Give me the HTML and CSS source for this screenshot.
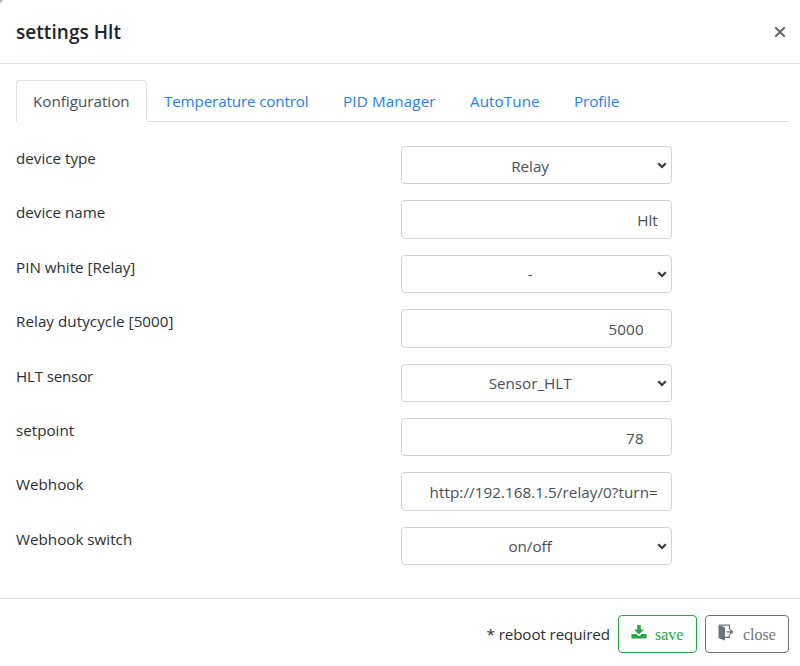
FILE: index.html
```html
<!DOCTYPE html>
<html lang="en">
<head>
<meta charset="utf-8">
<title>settings Hlt</title>
<link rel="stylesheet" href="styles.css">
</head>
<body>
<div class="modal">
  <header class="modal-header">
    <h5 class="title">settings Hlt</h5>
    <button class="dismiss" type="button" aria-label="dismiss"><svg width="12" height="12" viewBox="0 0 12 12"><path d="M1.2 1.2 10.8 10.8M10.8 1.2 1.2 10.8"/></svg></button>
  </header>
  <main class="modal-body">
    <nav class="tabs">
      <a class="tab active"><span>Konfiguration</span></a>
      <a class="tab temperature">Temperature control</a>
      <a class="tab pid">PID Manager</a>
      <a class="tab autotune">AutoTune</a>
      <a class="tab profile">Profile</a>
    </nav>
    <form class="form">
      <div class="row"><label>device type</label><div class="field"><select><option>Relay</option></select><svg class="chevron" viewBox="0 0 10 7"><path d="M1.2 1.3 5 5.1 8.8 1.3"/></svg></div></div>
      <div class="row"><label>device name</label><div class="field"><input type="text" value="Hlt"></div></div>
      <div class="row"><label>PIN white [Relay]</label><div class="field"><select><option>-</option></select><svg class="chevron" viewBox="0 0 10 7"><path d="M1.2 1.3 5 5.1 8.8 1.3"/></svg></div></div>
      <div class="row"><label class="duty">Relay dutycycle [5000]</label><div class="field"><input class="number" type="text" value="5000"></div></div>
      <div class="row"><label class="sensor">HLT sensor</label><div class="field"><select><option>Sensor_HLT</option></select><svg class="chevron" viewBox="0 0 10 7"><path d="M1.2 1.3 5 5.1 8.8 1.3"/></svg></div></div>
      <div class="row"><label>setpoint</label><div class="field"><input class="number" type="text" value="78"></div></div>
      <div class="row"><label>Webhook</label><div class="field"><input class="url" type="text" value="http://192.168.1.5/relay/0?turn="></div></div>
      <div class="row"><label>Webhook switch</label><div class="field"><select><option>on/off</option></select><svg class="chevron" viewBox="0 0 10 7"><path d="M1.2 1.3 5 5.1 8.8 1.3"/></svg></div></div>
    </form>
  </main>
  <footer class="modal-footer">
    <span class="note">* reboot required</span>
    <button class="btn save" type="button">
      <svg width="16" height="16" viewBox="0 0 16 16"><path d="M6.2 1h3.6v4.5H13L8 10.4 3 5.5h3.2z"/><path d="M1 10h4.2L8 12.3 10.8 10H15q.6 0 .6.6v3.3q0 .6-.6.6H1q-.6 0-.6-.6v-3.3Q.4 10 1 10z"/></svg>
      <span>save</span>
    </button>
    <button class="btn close" type="button">
      <svg width="16" height="17" viewBox="0 0 16 17"><path d="M.5 1.2 7 3v13.4L.5 14.3z"/><path class="line" d="M1 1.2h10.4v4.2M7 13.4h4.4v-3M8.5 7.9h5"/><path d="m12 4.8 3.6 3.1-3.6 3.1z"/></svg>
      <span>close</span>
    </button>
  </footer>
</div>
</body>
</html>
```
FILE: styles.css
```css
* { box-sizing: border-box; }

body {
  margin: 0;
  background: #b5b5b5;
  color: #2b2f33;
  font: 15.2px/24px "Open Sans", "Noto Sans", sans-serif;
}

.modal {
  width: 800px;
  height: 666px;
  display: flex;
  flex-direction: column;
  background: #fff;
  border-top-left-radius: 5px;
  overflow: hidden;
}

.modal-header {
  height: 64px;
  padding: 0 14px 0 16px;
  display: flex;
  align-items: center;
  justify-content: space-between;
  border-bottom: 1px solid #e2e6e8;
}

.title {
  margin: 1px 0 0;
  color: #212529;
  font-size: 19px;
  line-height: 30px;
  font-weight: 600;
  letter-spacing: 0.05px;
}

.dismiss {
  display: flex;
  padding: 0;
  border: 0;
  background: none;
}

.dismiss svg { fill: none; stroke: #6f6f6f; stroke-width: 2.3; }

.modal-body { flex: 1; padding: 16px 11px 0 16px; }

.tabs {
  height: 42px;
  display: flex;
  border-bottom: 1px solid #dee2e6;
}

.tab {
  height: 42px;
  padding: 9px 0 0 17px;
  color: #2480ee;
  white-space: nowrap;
}

.tab.active {
  width: 131px;
  padding: 8px 0 0 16px;
  color: #495057;
  background: #fff;
  border: 1px solid #dee2e6;
  border-bottom-color: #fff;
  border-radius: 4px 4px 0 0;
}

.temperature { width: 179px; letter-spacing: -0.14px; }
.pid { width: 127px; letter-spacing: 0.14px; }
.autotune { width: 104px; letter-spacing: 0.08px; }
.profile { letter-spacing: -0.1px; }

.form {
  padding-top: 24px;
  display: flex;
  flex-direction: column;
  gap: 16px;
}

.row {
  height: 38.4px;
  display: grid;
  grid-template-columns: 385.4px 270px;
}

.duty { letter-spacing: 0.05px; }
.sensor { letter-spacing: -0.2px; }

.field { position: relative; }

input,
select {
  display: block;
  width: 270.4px;
  height: 38.4px;
  margin: 0;
  padding: 1px 13px 0 12px;
  appearance: none;
  color: #495057;
  background: #fff;
  border: 1px solid #ced4da;
  border-radius: 4px;
  font: inherit;
  text-align: right;
}

select {
  padding-right: 25px;
  text-align: center;
  text-align-last: center;
}

input.number { padding-right: 27px; letter-spacing: 0.15px; }
input.url { letter-spacing: 0.07px; }

.chevron {
  position: absolute;
  right: 4px;
  top: 16px;
  width: 10px;
  height: 7px;
  fill: none;
  stroke: #343a40;
  stroke-width: 2.1;
}

.modal-footer {
  height: 68px;
  padding: 16px 11px 0 0;
  display: flex;
  align-items: flex-start;
  justify-content: flex-end;
  border-top: 1px solid #dee2e6;
}

.note { margin: 7px 8px 0 0; letter-spacing: -0.1px; }

.btn {
  height: 38.4px;
  padding: 2px 12px 0;
  display: flex;
  align-items: center;
  gap: 8px;
  color: #28a745;
  background: #fff;
  border: 1px solid currentColor;
  border-radius: 4px;
  font: 16px/24px "Liberation Serif", serif;
}

.btn svg { fill: currentColor; margin-top: -6px; }
.btn .line { fill: none; stroke: currentColor; stroke-width: 1.2; }
.save { width: 79px; margin-right: 8px; }
.close { width: 84px; color: #6c757d; gap: 9px; }
```
